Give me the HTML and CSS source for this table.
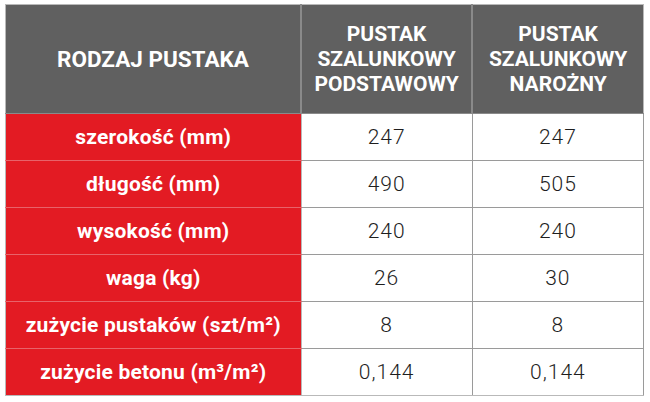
FILE: index.html
```html
<!DOCTYPE html>
<html lang="pl">
<head>
<meta charset="utf-8">
<title>Pustaki szalunkowe</title>
<link rel="stylesheet" href="styles.css">
</head>
<body>
<table class="spec">
  <thead>
    <tr>
      <th class="h-main">RODZAJ PUSTAKA</th>
      <th class="h-col">PUSTAK<br>SZALUNKOWY<br>PODSTAWOWY</th>
      <th class="h-col">PUSTAK<br>SZALUNKOWY<br>NAROŻNY</th>
    </tr>
  </thead>
  <tbody>
    <tr><th class="label">szerokość (mm)</th><td>247</td><td>247</td></tr>
    <tr><th class="label">długość (mm)</th><td>490</td><td>505</td></tr>
    <tr><th class="label">wysokość (mm)</th><td>240</td><td>240</td></tr>
    <tr><th class="label">waga (kg)</th><td>26</td><td>30</td></tr>
    <tr><th class="label">zużycie pustaków (szt/m²)</th><td>8</td><td>8</td></tr>
    <tr><th class="label">zużycie betonu (m³/m²)</th><td>0,144</td><td>0,144</td></tr>
  </tbody>
</table>
</body>
</html>
```
FILE: styles.css
```css
html, body {
  margin: 0;
  padding: 0;
  background: #ffffff;
}
body {
  padding: 4px 0 0 5px;
}
.spec {
  border-collapse: collapse;
  width: 639px;
  table-layout: fixed;
  font-family: Roboto, "Liberation Sans", sans-serif;
  border: 1px solid #b9b9b9;
}
.spec th, .spec td {
  padding: 0;
  text-align: center;
  vertical-align: middle;
}
.spec thead th {
  background: #606060;
  color: #ffffff;
  height: 108px;
  font-weight: 700;
  border-right: 2px solid #8a8a8a;
  border-bottom: 1px solid #8a8a8a;
}
.spec thead th:last-child {
  border-right: 1px solid #b9b9b9;
}
.h-main {
  width: 294px;
  font-size: 22.5px;
  padding-top: 6px;
}
.h-col {
  font-size: 21px;
  line-height: 25px;
  padding-top: 6px;
}
.label {
  background: #e31b23;
  color: #ffffff;
  font-weight: 700;
  font-size: 21px;
  letter-spacing: 0.2px;
  height: 46px;
  border-bottom: 1px solid #e8636a;
  border-right: 1px solid #b9b9b9;
}
.spec tbody tr:last-child .label {
  border-bottom: 1px solid #b9b9b9;
}
.spec td {
  color: #1e1e1e;
  font-size: 21px;
  font-weight: 300;
  letter-spacing: 1px;
  border-bottom: 1px solid #9a9a9a;
  border-right: 1px solid #9a9a9a;
}
.spec tbody tr:last-child td {
  border-bottom: 1px solid #b9b9b9;
}
```
